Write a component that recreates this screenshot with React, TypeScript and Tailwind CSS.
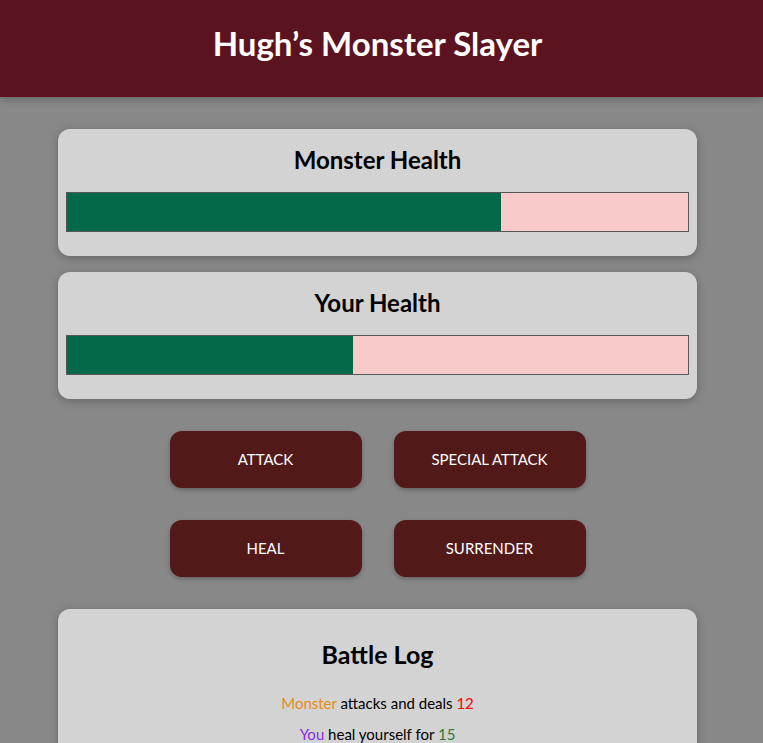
import React from "react";

type LogEntry = {
    actor: string,
    action: string,
    value: number
};

const logs: LogEntry[] = [
    { actor: "monster", action: "attack", value: 12 },
    { actor: "player", action: "heal", value: 15 },
];

function HealthCard({ title, percent }: { title: string, percent: number }) {
    return (
        <section className="bg-[#d3d3d3] rounded-xl p-2 shadow-[0_2px_8px_rgba(0,0,0,0.26)]">
            <h2 className="pt-[6px] leading-[33px] text-[24px] font-bold text-black text-center">{title}</h2>
            <div className="my-4 h-10 border border-[#575757] bg-[#f8caca]">
                <div className="h-full bg-[#03694a]" style={{ width: `${percent}%` }}></div>
            </div>
        </section>
    );
}

export default function App() {
    const buttons = ["ATTACK", "SPECIAL ATTACK", "HEAL", "SURRENDER"];

    return (
        <div className="min-h-[743px] bg-[#888888] font-['Lato','Open_Sans',sans-serif]">
            <header className="h-[97px] bg-[#5c1320] text-white text-center pt-[23px] pr-2 shadow-[0_2px_8px_rgba(0,0,0,0.26)]">
                <h1 className="text-[33px] font-bold leading-[40px]">Hugh&rsquo;s Monster Slayer</h1>
            </header>

            <div className="w-[639px] ml-[58px] pt-8 flex flex-col gap-4">
                <HealthCard title="Monster Health" percent={69.9} />
                <HealthCard title="Your Health" percent={46} />

                <div className="grid grid-cols-[192px_192px] justify-center gap-8 py-4">
                    {buttons.map((label) => (
                        <button
                            key={label}
                            className="h-[57px] rounded-xl bg-[#521919] text-white text-[15px] shadow-[0_2px_4px_rgba(0,0,0,0.26)]"
                        >{label}</button>
                    ))}
                </div>

                <section className="bg-[#d3d3d3] rounded-xl p-2 pt-[29px] shadow-[0_2px_8px_rgba(0,0,0,0.26)] text-center">
                    <h2 className="text-[25px] font-bold leading-[32px] text-black">Battle Log</h2>
                    <ul className="mt-[18px] text-[15px] text-black">
                        {logs.map((log, index) => (
                            <li key={index} className="leading-[31px]">
                                {log.actor === "monster" ?
                                    <span className="text-[#e38c1c]">Monster </span> :
                                    <span className="text-[#8a2be2]">You </span>
                                }
                                {log.action === "heal" ? (
                                    <>heal yourself for <span className="text-[#2a7a3a]">{log.value}</span></>
                                ) : (
                                    <>attacks and deals <span className="text-[#ff0000]">{log.value}</span></>
                                )}
                            </li>
                        ))}
                    </ul>
                </section>
            </div>
        </div>
    );
}
